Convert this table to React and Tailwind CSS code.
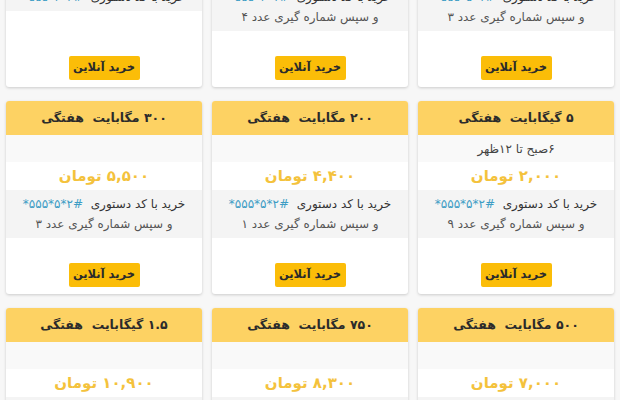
const plans = [
  { title: "۱ گیگابایت  هفتگی", price: "۳,۰۰۰", code: "*۵۵۵*۵*۱#", step: "۳" },
  { title: "۴۰۰ مگابایت  هفتگی", price: "۵,۰۰۰", code: "*۵۵۵*۴*۱#", step: "۴" },
  { title: "۷۰۰ مگابایت  هفتگی", price: "۶,۵۰۰", code: "*۵۵۵*۴*۲#" },
  { title: "۵ گیگابایت  هفتگی", sub: "۶صبح تا ۱۲ظهر", price: "۲,۰۰۰", code: "*۵۵۵*۵*۲#", step: "۹" },
  { title: "۲۰۰ مگابایت  هفتگی", price: "۴,۴۰۰", code: "*۵۵۵*۵*۲#", step: "۱" },
  { title: "۳۰۰ مگابایت  هفتگی", price: "۵,۵۰۰", code: "*۵۵۵*۵*۲#", step: "۳" },
  { title: "۵۰۰ مگابایت  هفتگی", price: "۷,۰۰۰", code: "*۵۵۵*۵*۲#", step: "۲" },
  { title: "۷۵۰ مگابایت  هفتگی", price: "۸,۳۰۰", code: "*۵۵۵*۵*۲#", step: "۴" },
  { title: "۱.۵ گیگابایت  هفتگی", price: "۱۰,۹۰۰", code: "*۵۵۵*۵*۲#", step: "۵" },
];

const PlanCard = ({ plan }) => (
  <div className="flex flex-col bg-white rounded-[3px] shadow-[0_1px_3px_rgba(0,0,0,0.18)] overflow-hidden">
    <div className="h-[34px] flex items-center justify-center bg-[#fdd263] text-[12.5px] font-bold text-[#2b2b2b] whitespace-pre">
      {plan.title}
    </div>
    <div className="h-[27px] flex items-center justify-center bg-[#f9f9f9] text-[12px] text-[#444]">
      {plan.sub}
    </div>
    <div className="h-[28px] flex items-center justify-center text-[15px] font-bold text-[#f4c23c]">
      {plan.price} تومان
    </div>
    <div className="bg-[#f4f4f4] py-[4px] text-center text-[12px]">
      <p className="leading-[20px] text-[#333] whitespace-pre">
        خرید با کد دستوری{"  "}
        <span className="inline-block [direction:ltr] [unicode-bidi:bidi-override] text-[#3d9cc4] tracking-[0.5px]">{plan.code}</span>
      </p>
      {plan.step && <p className="leading-[20px] text-[#555]">و سپس شماره گیری عدد {plan.step}</p>}
    </div>
    <div className="flex-1 flex items-end justify-center pt-[25px] pb-[7px]">
      <button className="h-[24px] w-[71px] rounded-[2px] bg-[#fbbd08] text-[11.5px] font-bold text-[#2b2b2b]">
        خرید آنلاین
      </button>
    </div>
  </div>
);

export default function App() {
  return (
    <div dir="rtl" className="h-[400px] overflow-hidden bg-[#f7f7f7] font-['DejaVu_Sans',sans-serif]">
      <div className="-mt-[106px] grid grid-cols-3 gap-x-[10px] gap-y-[14px] px-[6px]">
        {plans.map((p, i) => (
          <PlanCard key={i} plan={p} />
        ))}
      </div>
    </div>
  );
}
